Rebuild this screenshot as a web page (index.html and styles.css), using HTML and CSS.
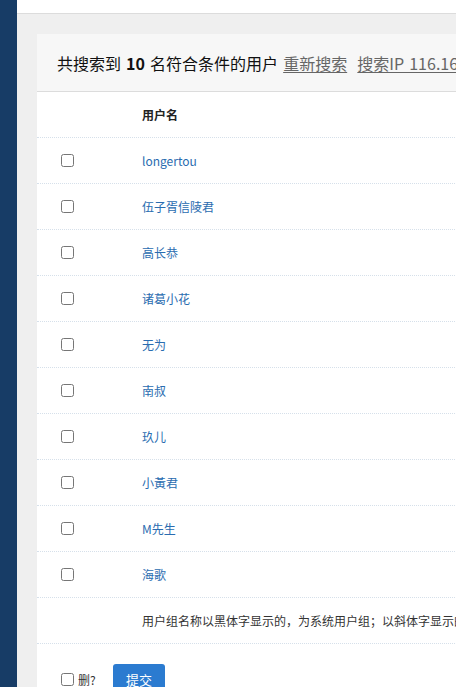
FILE: index.html
```html
<!DOCTYPE html>
<html lang="zh">
<head>
<meta charset="utf-8">
<link rel="stylesheet" href="styles.css">
</head>
<body>
<div class="layout">
  <aside class="sidebar"></aside>
  <main class="main">
    <div class="topbar"></div>
    <div class="content">
      <section class="card">
        <div class="card-head">共搜索到 <b>10</b> 名符合条件的用户 <a class="link" href="#">重新搜索</a>&nbsp; <a class="link" href="#">搜索IP 116.169.4.2 的用户</a></div>
        <div class="row head-row"><span class="cell-check"></span><span class="cell-name bold">用户名</span></div>
        <div class="row"><span class="cell-check"><input type="checkbox"></span><a class="cell-name user" href="#">longertou</a></div>
        <div class="row"><span class="cell-check"><input type="checkbox"></span><a class="cell-name user" href="#">伍子胥信陵君</a></div>
        <div class="row"><span class="cell-check"><input type="checkbox"></span><a class="cell-name user" href="#">高长恭</a></div>
        <div class="row"><span class="cell-check"><input type="checkbox"></span><a class="cell-name user" href="#">诸葛小花</a></div>
        <div class="row"><span class="cell-check"><input type="checkbox"></span><a class="cell-name user" href="#">无为</a></div>
        <div class="row"><span class="cell-check"><input type="checkbox"></span><a class="cell-name user" href="#">南叔</a></div>
        <div class="row"><span class="cell-check"><input type="checkbox"></span><a class="cell-name user" href="#">玖儿</a></div>
        <div class="row"><span class="cell-check"><input type="checkbox"></span><a class="cell-name user" href="#">小黃君</a></div>
        <div class="row"><span class="cell-check"><input type="checkbox"></span><a class="cell-name user" href="#">M先生</a></div>
        <div class="row"><span class="cell-check"><input type="checkbox"></span><a class="cell-name user" href="#">海歌</a></div>
        <div class="row"><span class="cell-check"></span><span class="cell-name note">用户组名称以黑体字显示的，为系统用户组；以斜体字显示的，为特殊用户组</span></div>
        <div class="foot">
          <label class="del"><input type="checkbox">删?</label>
          <button class="submit" type="button">提交</button>
        </div>
      </section>
    </div>
  </main>
</div>
</body>
</html>
```
FILE: styles.css
```css
html, body {
  margin: 0;
  padding: 0;
  height: 100%;
  overflow: hidden;
}
body {
  font-family: "Noto Sans CJK SC", "Noto Sans", sans-serif;
  color: #222;
  background: #efefef;
}
.layout {
  display: flex;
  height: 687px;
}
.sidebar {
  width: 17px;
  flex: 0 0 17px;
  background: #173c66;
}
.main {
  flex: 1;
  min-width: 0;
  overflow: hidden;
}
.topbar {
  height: 13px;
  background: #fff;
  border-bottom: 1px solid #dcdcdc;
}
.content {
  padding: 20px 0 0 20px;
}
.card {
  width: 700px;
  background: #fff;
}
.card-head {
  height: 58px;
  box-sizing: border-box;
  background: #f7f7f7;
  border-bottom: 1px solid #dcdcdc;
  padding: 0 20px;
  display: flex;
  align-items: center;
  white-space: pre;
  font-size: 16px;
  line-height: 20px;
  word-spacing: 1.5px;
  color: #111;
}
.card-head b {
  font-weight: 700;
}
.link {
  color: #666;
  text-decoration: underline;
  text-underline-offset: 2px;
}
.row {
  height: 46px;
  box-sizing: border-box;
  border-bottom: 1px dotted #d6e0ea;
  display: flex;
  align-items: center;
  font-size: 12px;
  white-space: nowrap;
}
.cell-check {
  width: 105px;
  flex: 0 0 105px;
  display: flex;
  align-items: center;
  padding-left: 20px;
  box-sizing: border-box;
}
.cell-check input {
  margin: 0 0 0 4px;
  width: 13px;
  height: 13px;
}
.cell-name {
  line-height: 16px;
}
.bold {
  font-weight: 700;
  color: #222;
}
.user {
  color: #2a6cb0;
  text-decoration: none;
}
.note {
  color: #333;
}
.foot {
  display: flex;
  align-items: center;
  padding: 20px 0 0 24px;
  font-size: 12px;
}
.del {
  display: flex;
  align-items: center;
  color: #333;
  width: 52px;
}
.del input {
  margin: 0 4px 0 0;
  width: 13px;
  height: 13px;
}
.submit {
  font-family: inherit;
  font-size: 13px;
  color: #fff;
  background: #2b7bd0;
  border: 0;
  border-radius: 3px;
  width: 52px;
  height: 30px;
  padding: 0;
}
```
